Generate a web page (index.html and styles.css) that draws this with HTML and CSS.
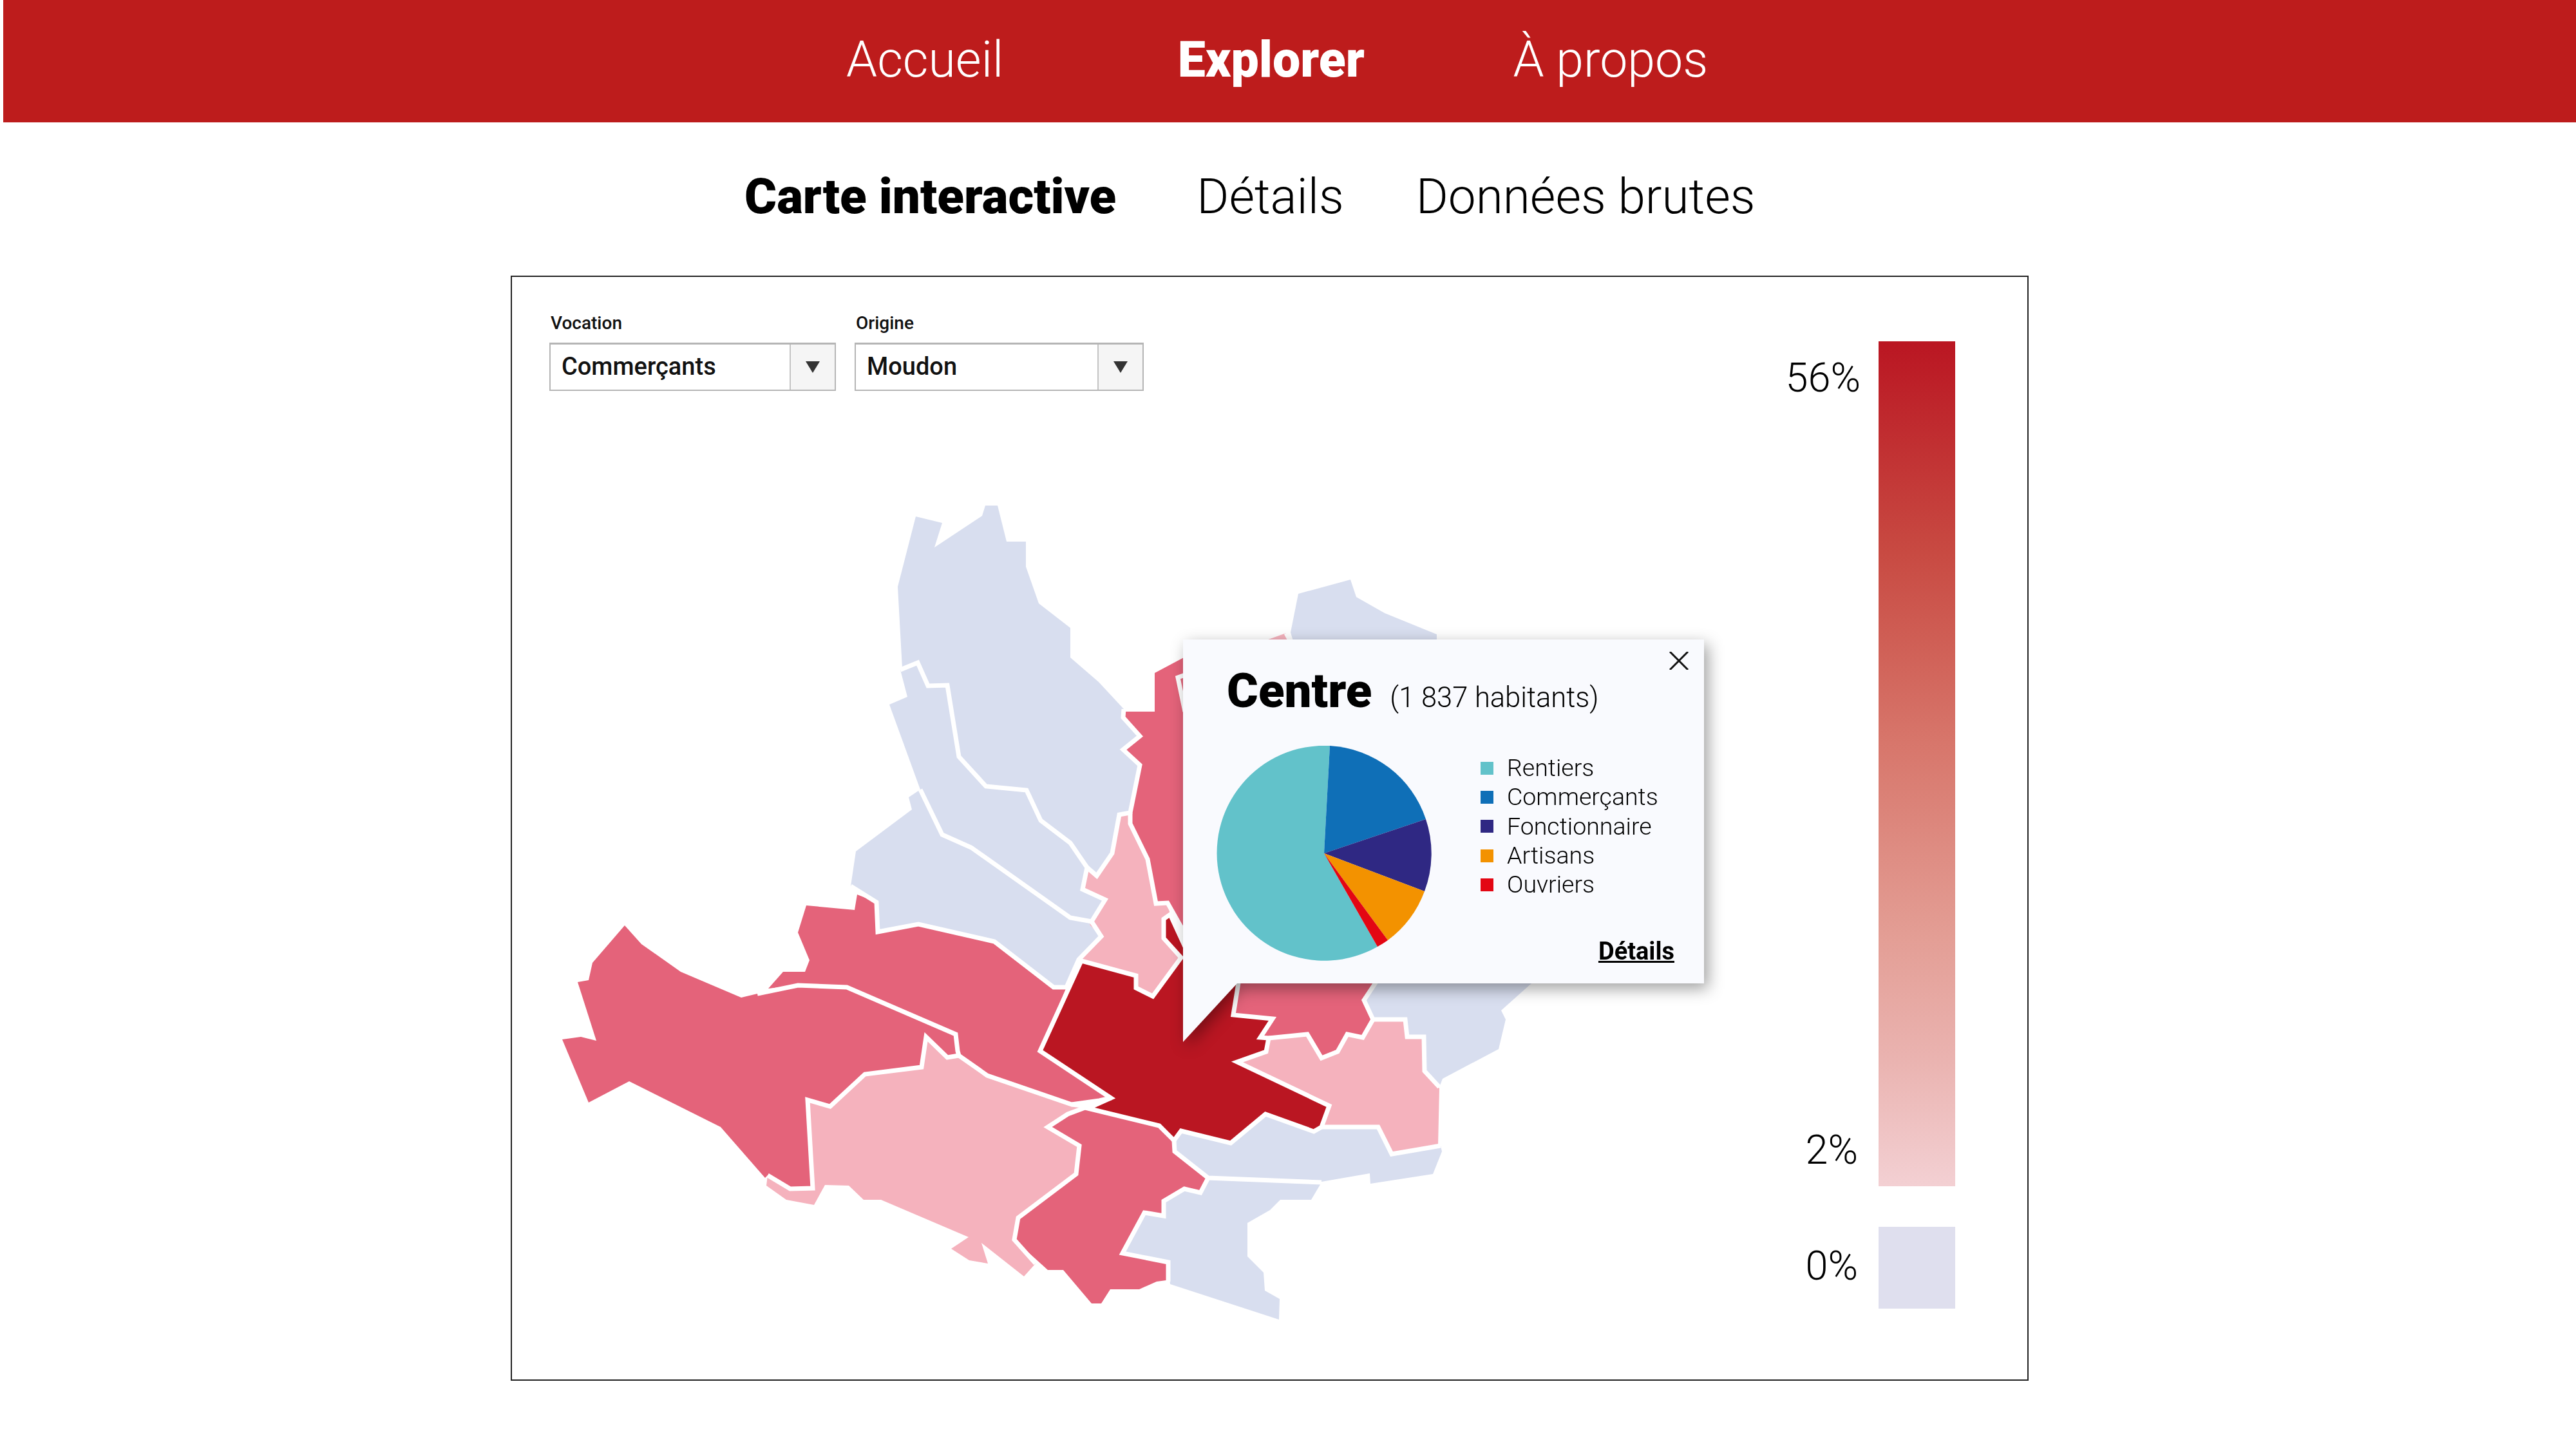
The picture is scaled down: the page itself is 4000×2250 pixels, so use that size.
FILE: index.html
```html
<!DOCTYPE html>
<html lang="fr">
<head>
<meta charset="utf-8">
<title>Explorer</title>
<link rel="stylesheet" href="styles.css">
</head>
<body>
<header class="topbar">
  <a class="top-link">Accueil</a>
  <a class="top-link active">Explorer</a>
  <a class="top-link last">À propos</a>
</header>
<nav class="tabs">
  <a class="tab active">Carte interactive</a>
  <a class="tab">Détails</a>
  <a class="tab last">Données brutes</a>
</nav>
<main class="panel">
  <section class="left">
    <div class="filters">
      <div class="filter">
        <label class="filter-label">Vocation</label>
        <div class="select vocation"><span class="select-value">Commerçants</span><span class="select-btn"><i class="arrow"></i></span></div>
      </div>
      <div class="filter">
        <label class="filter-label">Origine</label>
        <div class="select origine"><span class="select-value">Moudon</span><span class="select-btn"><i class="arrow"></i></span></div>
      </div>
    </div>
    <svg class="map" viewBox="860 770 1560 1290" xmlns="http://www.w3.org/2000/svg">
      <g class="blue">
        <polygon points="1422,802 1463,812 1451,850 1525,801 1530,785 1549,785 1563,841 1593,841 1593,880 1613,937 1662,975 1662,1021 1706,1059 1745,1101 1744,1114 1770,1143 1744,1164 1770,1188 1755,1262 1738,1265 1727,1325 1703,1360 1662,1309 1616,1274 1594,1227 1531,1221 1489,1175 1471,1064 1441,1065 1425,1029 1401,1038 1394,911"/>
        <polygon points="1398,1040 1425,1029 1441,1065 1471,1064 1489,1175 1531,1221 1594,1227 1616,1274 1662,1309 1688,1347 1681,1381 1716,1397 1695,1431 1662,1425 1508,1316 1463,1296 1429,1226 1381,1094 1409,1082"/>
        <polygon points="1429,1226 1411,1238 1416,1257 1329,1322 1321,1376 1361,1401 1363,1447 1426,1435 1544,1462 1636,1533 1656,1533 1675,1490 1710,1454 1692,1436 1695,1431 1662,1425 1508,1316 1463,1296"/>
        <polygon points="2004,982 2016,922 2097,900 2106,927 2150,952 2231,985 2231,1010 2400,1500 2378,1527 2331,1569 2338,1583 2327,1629 2240,1675 2235,1688 2212,1663 2211,1610 2185,1610 2182,1583 2132,1583 2118,1553 2136,1527 2100,1300"/>
        <polygon points="2054,1750 2140,1750 2161,1792 2237,1779 2239,1788 2225,1823 2128,1838 2127,1822 2052,1835 1876,1829 1824,1788 1823,1771 1834,1756 1911,1775 1965,1730 2040,1757"/>
        <polygon points="1876,1829 2052,1836 2036,1863 1988,1863 1972,1879 1937,1899 1937,1951 1962,1976 1964,2004 1987,2017 1986,2049 1817,1994 1814,1960 1743,1946 1777,1883 1807,1888 1807,1865 1839,1846 1864,1852"/>
      </g>
      <g class="pale">
        <polygon points="1950,1000 1997,983 2006,1000"/>
        <polygon points="1738,1265 1755,1262 1755,1279 1782,1334 1795,1403 1813,1402 1817,1420 1807,1427 1807,1457 1834,1487 1790,1547 1764,1534 1764,1515 1679,1492 1675,1490 1710,1454 1692,1436 1695,1431 1716,1397 1681,1381 1688,1347 1703,1360 1727,1325"/>
        <polygon points="1970,1612 2030,1606 2052,1643 2077,1633 2092,1606 2116,1611 2132,1583 2182,1583 2185,1610 2211,1610 2212,1663 2235,1690 2233,1779 2161,1792 2140,1750 2054,1749 2064,1717 1921,1649 1966,1633"/>
        <polygon points="1438,1610 1471,1642 1489,1639 1533,1670 1664,1715 1690,1718 1658,1730 1627,1750 1676,1779 1671,1823 1581,1891 1575,1925 1608,1962 1590,1982 1524,1930 1534,1962 1505,1957 1477,1939 1504,1921 1368,1863 1341,1863 1318,1841 1281,1840 1264,1871 1221,1863 1190,1841 1192,1825 1227,1846 1262,1845 1254,1708 1289,1718 1343,1668 1431,1657"/>
      </g>
      <g class="rose">
        <polygon points="1793,1045 1840,1020 1840,1450 1813,1402 1795,1403 1782,1334 1755,1279 1755,1262 1770,1188 1744,1164 1770,1143 1744,1114 1748,1105 1793,1105"/>
        <polygon points="1900,1500 1924,1526 1915,1576 1976,1582 1957,1611 2030,1606 2052,1643 2077,1633 2092,1606 2116,1611 2132,1583 2118,1553 2136,1527 2140,1500"/>
        <polygon points="1252,1406 1327,1413 1331,1389 1361,1401 1363,1447 1426,1435 1544,1462 1636,1533 1656,1533 1615,1632 1725,1705 1707,1709 1664,1715 1533,1670 1489,1639 1487,1632 1484,1606 1315,1533 1239,1530 1193,1535 1216,1509 1250,1509 1257,1491 1239,1448"/>
        <polygon points="970,1437 996,1466 1057,1509 1151,1549 1176,1543 1239,1530 1315,1533 1484,1606 1487,1632 1489,1639 1471,1642 1438,1610 1431,1657 1343,1668 1289,1718 1254,1708 1262,1845 1227,1846 1192,1825 1188,1829 1119,1750 977,1679 914,1712 873,1614 902,1610 926,1616 897,1525 914,1522 920,1495"/>
        <polygon points="1689,1721 1800,1748 1823,1771 1824,1788 1876,1829 1864,1852 1839,1846 1807,1865 1807,1888 1777,1883 1743,1946 1814,1960 1811,1988 1796,1990 1769,2002 1724,2002 1710,2024 1695,2024 1651,1972 1627,1972 1575,1925 1581,1891 1671,1823 1676,1779 1627,1750 1658,1730"/>
      </g>
      <polygon class="centre" points="1679,1492 1764,1515 1764,1534 1790,1547 1834,1487 1807,1457 1807,1427 1817,1420 1850,1480 1924,1526 1915,1576 1976,1582 1957,1611 1970,1612 1966,1633 1921,1649 2064,1717 2052,1750 2040,1757 1965,1730 1911,1775 1834,1756 1823,1771 1800,1748 1689,1721 1725,1705 1615,1632"/>
      <g class="borders">
        <polyline points="1398,1040 1425,1029 1441,1065 1471,1064 1489,1175 1531,1221 1594,1227 1616,1274 1662,1309 1688,1347 1681,1381 1716,1397 1695,1431 1662,1425 1508,1316 1463,1296 1429,1226"/>
        <polyline points="1745,1101 1744,1114 1770,1143 1744,1164 1770,1188 1755,1262 1738,1265 1727,1325 1703,1360 1688,1347"/>
        <polyline points="1755,1262 1755,1279 1782,1334 1795,1403 1813,1402 1840,1450"/>
        <polyline points="1695,1431 1710,1454 1675,1490 1656,1533 1636,1533 1544,1462 1426,1435 1363,1447 1361,1401 1321,1376"/>
        <polyline points="1675,1490 1679,1492 1764,1515 1764,1534 1790,1547 1834,1487 1807,1457 1807,1427 1817,1420 1840,1470"/>
        <polyline points="1679,1492 1615,1632 1725,1705 1689,1721 1800,1748 1823,1771 1834,1756 1911,1775 1965,1730 2040,1757 2052,1750 2064,1717 1921,1649 1966,1633 1970,1612 1957,1611 1976,1582 1915,1576 1924,1520"/>
        <polyline points="1970,1612 2030,1606 2052,1643 2077,1633 2092,1606 2116,1611 2132,1583 2118,1553 2140,1520"/>
        <polyline points="2132,1583 2182,1583 2185,1610 2211,1610 2212,1663 2235,1688"/>
        <polyline points="2052,1750 2140,1750 2161,1792 2237,1779"/>
        <polyline points="1823,1771 1824,1788 1876,1829 2052,1836"/>
        <polyline points="1876,1829 1864,1852 1839,1846 1807,1865 1807,1888 1777,1883 1743,1946 1814,1960 1814,1990"/>
        <polyline points="1192,1825 1227,1846 1262,1845 1254,1708 1289,1718 1343,1668 1431,1657 1438,1610 1471,1642 1489,1639"/>
        <polyline points="1176,1543 1239,1530 1315,1533 1484,1606 1487,1632 1489,1639 1533,1670 1664,1715 1707,1709 1725,1705"/>
        <polyline points="1664,1715 1690,1718 1658,1730 1627,1750 1676,1779 1671,1823 1581,1891 1575,1925 1608,1962"/>
        <polyline points="1840,1048 1829,1052 1840,1105"/>
        <polyline points="1997,983 2004,996"/>
      </g>
    </svg>
  </section>
  <aside class="scale">
    <div class="scale-labels"><span>56%</span><span class="low">2%</span></div>
    <div class="scale-bar"></div>
    <div class="zero-label"><span class="low">0%</span></div>
    <div class="zero-box"></div>
  </aside>
  <article class="popup">
    <div class="popup-box">
      <svg class="close" viewBox="0 0 30 28" xmlns="http://www.w3.org/2000/svg"><path d="M1 0 29 28M29 0 1 28"/></svg>
      <h2 class="popup-title"><strong>Centre</strong><span>(1 837 habitants)</span></h2>
      <div class="popup-body">
        <svg class="pie" viewBox="-167 -167 334 334" xmlns="http://www.w3.org/2000/svg">
          <path class="s1" d="M0 0 83 145A167 167 0 1 1 9 -167Z"/>
          <path class="s2" d="M0 0 9 -167A167 167 0 0 1 158 -53Z"/>
          <path class="s3" d="M0 0 158 -53A167 167 0 0 1 156 59Z"/>
          <path class="s4" d="M0 0 156 59A167 167 0 0 1 99 135Z"/>
          <path class="s5" d="M0 0 99 135A167 167 0 0 1 83 145Z"/>
        </svg>
        <ul class="pie-legend">
          <li><i class="dot c1"></i>Rentiers</li>
          <li><i class="dot c2"></i>Commerçants</li>
          <li><i class="dot c3"></i>Fonctionnaire</li>
          <li><i class="dot c4"></i>Artisans</li>
          <li><i class="dot c5"></i>Ouvriers</li>
        </ul>
      </div>
      <a class="popup-link">Détails</a>
    </div>
    <div class="popup-tail"></div>
  </article>
</main>
</body>
</html>
```
FILE: styles.css
```css
* { box-sizing: border-box; }
html, body { margin: 0; padding: 0; background: #fff; }
body { font-family: Roboto, "Liberation Sans", sans-serif; color: #000; width: 4000px; height: 2250px; overflow: hidden; }

.topbar { margin-left: 5px; height: 190px; background: #bd1c1c; display: flex; align-items: center; padding: 0 0 4px 1309px; gap: 270.5px; color: #fff; }
.top-link { font-size: 77px; font-weight: 300; line-height: 1; }
.top-link.active { font-weight: 900; }
.top-link.last { margin-left: -40px; }

.tabs { height: 238px; display: flex; align-items: flex-start; padding: 77px 0 0 1156px; gap: 125px; }
.tab { font-size: 76.5px; font-weight: 300; line-height: 1; }
.tab.active { font-weight: 900; }
.tab.last { margin-left: -13px; }

.panel { position: relative; margin-left: 793px; width: 2357px; height: 1716px; border: 2px solid #222; display: flex; justify-content: space-between; }
.left { padding: 57px 0 0 58px; }
.filters { display: flex; gap: 29px; height: 120px; }
.filter { display: flex; flex-direction: column; }
.filter-label { font-size: 28px; font-weight: 500; line-height: 30px; height: 45px; color: #111; padding-left: 2px; }
.select { height: 75px; border: 2px solid #b5b5b5; border-top-width: 3px; display: flex; background: #fff; }
.vocation { width: 445px; }
.origine { width: 449px; }
.select-value { flex: 1; font-size: 38px; font-weight: 500; line-height: 69px; padding-left: 17px; color: #111; }
.select-btn { width: 70px; background: #f5f5f5; border-left: 2px solid #c4c4c4; display: flex; align-items: center; justify-content: center; }
.arrow { width: 22px; height: 18px; background: #333; clip-path: polygon(0 0, 100% 0, 50% 100%); }

.map { display: block; width: 1560px; height: 1290px; margin: 163px 0 0 7px; }
.blue { fill: #d8deef; }
.pale { fill: #f5b2bd; }
.rose { fill: #e4637a; }
.centre { fill: #ba1622; }
.borders { fill: none; stroke: #fff; stroke-width: 7; stroke-linejoin: miter; }

.scale { display: grid; grid-template-columns: auto 119px; grid-template-rows: 1312px 127px; row-gap: 63px; column-gap: 28px; margin: 100px 112px 0 0; height: 1502px; }
.scale-labels { display: flex; flex-direction: column; justify-content: space-between; align-items: flex-end; font-size: 63px; font-weight: 300; line-height: 75px; padding: 19px 0 0; margin-bottom: 19px; }
.scale-labels .low { margin-right: 4px; }
.zero-label { font-size: 63px; font-weight: 300; line-height: 75px; padding-top: 23px; text-align: right; }
.zero-label .low { margin-right: 4px; }
.scale-bar { background: linear-gradient(#ba1622 0%, #c84a42 25%, #d7756a 47%, #e39d94 70%, #eab3b0 85%, #f3d0d3 100%); }
.zero-box { background: #dfdfee; }

.popup { position: absolute; left: 1042px; top: 563px; width: 809px; filter: drop-shadow(6px 8px 12px rgba(0, 0, 0, .38)); }
.popup-box { position: relative; height: 534px; background: #f9fafe; padding: 38px 46px 0 68px; }
.popup-tail { width: 84px; height: 91px; background: #f9fafe; clip-path: polygon(0 0, 100% 0, 0 100%); }
.close { position: absolute; right: 24px; top: 19px; width: 30px; height: 28px; fill: none; stroke: #111; stroke-width: 3; }
.popup-title { margin: 0; font-weight: 400; display: flex; align-items: baseline; gap: 28px; line-height: 84px; }
.popup-title strong { font-size: 74.5px; font-weight: 900; }
.popup-title span { font-size: 43.5px; font-weight: 300; }
.popup-body { display: flex; margin: 32px 0 0 -16px; align-items: flex-start; }
.pie { width: 334px; height: 334px; flex: none; }
.s1 { fill: #62c2ca; }
.s2 { fill: #0f6fb7; }
.s3 { fill: #2f2883; }
.s4 { fill: #f39200; }
.s5 { fill: #e30613; }
.pie-legend { list-style: none; margin: 12px 0 0 76px; padding: 0; }
.pie-legend li { display: flex; align-items: center; gap: 21px; font-size: 37.5px; font-weight: 300; line-height: 45.3px; white-space: nowrap; }
.dot { width: 20px; height: 20px; }
.c1 { background: #62c2ca; }
.c2 { background: #0f6fb7; }
.c3 { background: #2f2883; }
.c4 { background: #f39200; }
.c5 { background: #e30613; }
.popup-link { position: absolute; right: 46px; bottom: 28px; font-size: 38px; font-weight: 700; text-decoration: underline; line-height: 44px; }
```
